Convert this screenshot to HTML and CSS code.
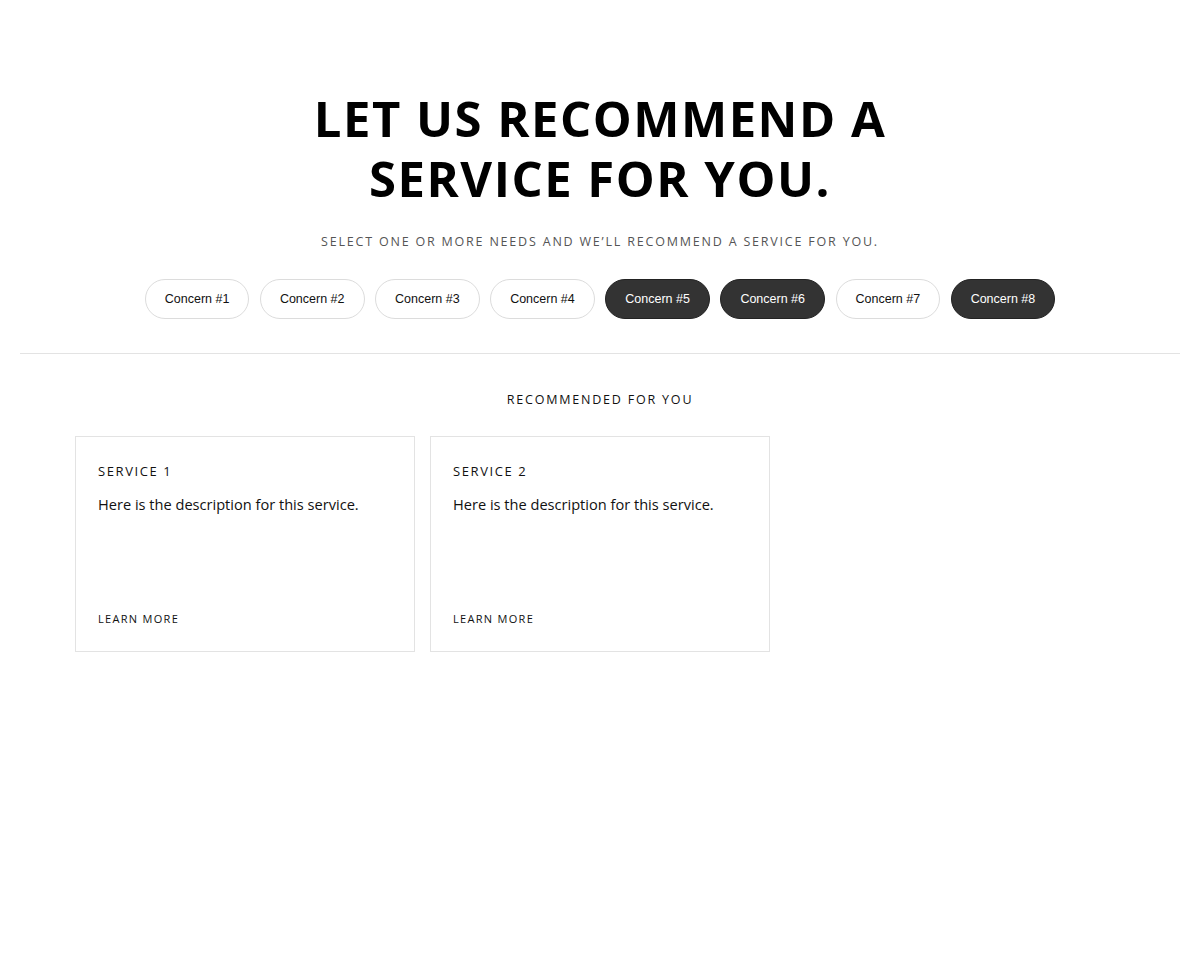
FILE: index.html
```html
<!DOCTYPE html>
<html>
<head>
<meta charset="utf-8">
<link rel="stylesheet" href="styles.css">
</head>
<body>
<main class="page">
  <section class="intro">
    <h1 class="title">LET US RECOMMEND A<br>SERVICE FOR YOU.</h1>
    <p class="subtitle">SELECT ONE OR MORE NEEDS AND WE’LL RECOMMEND A SERVICE FOR YOU.</p>
    <div class="chips">
      <button class="chip">Concern #1</button>
      <button class="chip">Concern #2</button>
      <button class="chip">Concern #3</button>
      <button class="chip">Concern #4</button>
      <button class="chip active">Concern #5</button>
      <button class="chip active">Concern #6</button>
      <button class="chip">Concern #7</button>
      <button class="chip active">Concern #8</button>
    </div>
  </section>
  <hr class="divider">
  <section class="results">
    <h2 class="results-title">RECOMMENDED FOR YOU</h2>
    <div class="cards">
      <div class="card">
        <h3 class="card-title">SERVICE 1</h3>
        <p class="card-desc">Here is the description for this service.</p>
        <a class="card-link">LEARN MORE</a>
      </div>
      <div class="card">
        <h3 class="card-title">SERVICE 2</h3>
        <p class="card-desc">Here is the description for this service.</p>
        <a class="card-link">LEARN MORE</a>
      </div>
    </div>
  </section>
</main>
</body>
</html>
```
FILE: styles.css
```css
* { box-sizing: border-box; }
html, body { margin: 0; padding: 0; background: #fff; }
body { font-family: "Open Sans", "Liberation Sans", sans-serif; color: #111; }
.page { padding: 0 20px; }
.intro { padding-top: 88px; display: flex; flex-direction: column; align-items: center; }
.title {
  margin: 0;
  font-family: "Open Sans", sans-serif;
  font-weight: 700;
  font-size: 49px;
  line-height: 60px;
  letter-spacing: 1.5px;
  text-align: center;
  color: #000;
}
.subtitle {
  margin: 24px 0 0;
  font-size: 12.5px;
  letter-spacing: 1.8px;
  color: #555;
  line-height: 20px;
}
.chips { margin-top: 27px; display: flex; gap: 10.5px; justify-content: center; }
.chip {
  height: 40px;
  padding: 0 19px;
  border-radius: 20px;
  border: 1px solid #dcdcdc;
  background: #fff;
  font-family: "Liberation Sans", Arial, sans-serif;
  font-size: 12.5px;
  color: #111;
}
.chip.active { background: #333; border-color: #222; color: #fff; }
.divider { margin: 34px 0 0; border: 0; border-top: 1px solid #e3e3e3; height: 0; }
.results { width: 1050px; margin: 0 auto; }
.results-title {
  margin: 38px 0 0;
  text-align: center;
  font-weight: 400;
  font-size: 12.5px;
  letter-spacing: 1.8px;
  line-height: 16px;
  color: #111;
}
.cards { margin-top: 28px; display: grid; grid-template-columns: repeat(3, 340px); gap: 15px; }
.card {
  height: 216px;
  border: 1px solid #e3e3e3;
  padding: 26px 22px 25px;
  display: flex;
  flex-direction: column;
}
.card-title { margin: 0; font-weight: 400; font-size: 13px; letter-spacing: 1.6px; line-height: 16px; }
.card-desc { margin: 16px 0 0; font-size: 14.6px; line-height: 18px; color: #111; }
.card-link { margin-top: auto; font-size: 11px; letter-spacing: 1.3px; line-height: 14px; color: #111; }
```
